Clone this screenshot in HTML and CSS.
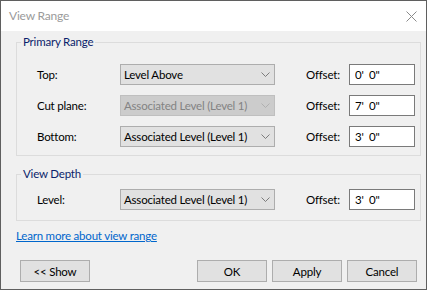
FILE: index.html
```html
<!DOCTYPE html>
<html lang="en">
<head>
  <meta charset="UTF-8">
  <title>View Range</title>
  <link rel="stylesheet" href="styles.css">
</head>
<body>
  <div class="dialog">
    <div class="titlebar">
      <span class="title">View Range</span>
      <svg class="close" width="11" height="11" viewBox="0 0 11 11">
        <path d="M0.5 0.5 L10.5 10.5 M10.5 0.5 L0.5 10.5" stroke="#8a8a8a" stroke-width="1" fill="none"/>
      </svg>
    </div>
    <div class="content">
      <fieldset class="group primary">
        <legend>Primary Range</legend>
        <div class="group-body">
          <div class="row">
            <span class="label">Top:</span>
            <div class="combo"><span>Level Above</span><svg class="chev" width="9" height="5" viewBox="0 0 9 5"><path d="M0.5 0.5 L4.5 4.5 L8.5 0.5" stroke="#707070" stroke-width="0.9" fill="none"/></svg></div>
            <span class="offset-label">Offset:</span>
            <input class="offset" type="text" value="0'  0&quot;">
          </div>
          <div class="row">
            <span class="label">Cut plane:</span>
            <div class="combo disabled"><span>Associated Level (Level 1)</span><svg class="chev" width="9" height="5" viewBox="0 0 9 5"><path d="M0.5 0.5 L4.5 4.5 L8.5 0.5" stroke="#adadad" stroke-width="0.9" fill="none"/></svg></div>
            <span class="offset-label">Offset:</span>
            <input class="offset" type="text" value="7'  0&quot;">
          </div>
          <div class="row">
            <span class="label">Bottom:</span>
            <div class="combo"><span>Associated Level (Level 1)</span><svg class="chev" width="9" height="5" viewBox="0 0 9 5"><path d="M0.5 0.5 L4.5 4.5 L8.5 0.5" stroke="#707070" stroke-width="0.9" fill="none"/></svg></div>
            <span class="offset-label">Offset:</span>
            <input class="offset" type="text" value="3'  0&quot;">
          </div>
        </div>
      </fieldset>
      <fieldset class="group depth">
        <legend>View Depth</legend>
        <div class="group-body">
          <div class="row">
            <span class="label">Level:</span>
            <div class="combo"><span>Associated Level (Level 1)</span><svg class="chev" width="9" height="5" viewBox="0 0 9 5"><path d="M0.5 0.5 L4.5 4.5 L8.5 0.5" stroke="#707070" stroke-width="0.9" fill="none"/></svg></div>
            <span class="offset-label">Offset:</span>
            <input class="offset" type="text" value="3'  0&quot;">
          </div>
        </div>
      </fieldset>
      <a class="help-link" href="#">Learn more about view range</a>
      <div class="buttons">
        <button class="btn">&lt;&lt; Show</button>
        <span class="spacer"></span>
        <button class="btn">OK</button>
        <button class="btn">Apply</button>
        <button class="btn">Cancel</button>
      </div>
    </div>
  </div>
</body>
</html>
```

FILE: styles.css
```css
body {
  margin: 0;
  font-family: Lato, "Liberation Sans", sans-serif;
  font-size: 11.5px;
  letter-spacing: -0.2px;
  color: #000;
}
.dialog {
  width: 427px;
  height: 290px;
  box-sizing: border-box;
  border: 1px solid #5f5f5f;
  background: #f0f0f0;
  display: flex;
  flex-direction: column;
}
.titlebar {
  height: 30px;
  flex: none;
  background: #fff;
  display: flex;
  align-items: center;
  justify-content: space-between;
  padding: 0 9px 0 8px;
}
.title {
  color: #9a9a9a;
  font-size: 12px;
  line-height: 16px;
}
.content {
  flex: 1;
  display: flex;
  flex-direction: column;
  padding: 0 5px 0 15px;
}
.group {
  margin: 0;
  padding: 0;
  border: 1px solid #dcdcdc;
  min-width: 0;
}
.group legend {
  padding: 0 2px;
  margin-left: 4px;
  line-height: 16px;
  color: #0b1e6b;
}
.primary {
  margin-top: 3px;
}
.primary .group-body {
  padding: 14px 0 8px 20px;
  display: flex;
  flex-direction: column;
  gap: 10px;
}
.depth {
  margin-top: 10px;
}
.depth .group-body {
  padding: 7px 0 10px 20px;
}
.row {
  display: flex;
  align-items: center;
  height: 21px;
}
.label {
  width: 83px;
  flex: none;
}
.combo {
  width: 155px;
  height: 21px;
  box-sizing: border-box;
  flex: none;
  border: 1px solid #adadad;
  background: #e1e1e1;
  display: flex;
  align-items: center;
  justify-content: space-between;
  padding: 0 4px 0 3px;
  white-space: nowrap;
}
.combo.disabled {
  background: #cccccc;
  border-color: #bfbfbf;
  color: #838383;
}
.chev {
  flex: none;
}
.offset-label {
  margin-left: 31px;
  width: 43px;
  flex: none;
}
.offset {
  width: 66px;
  height: 21px;
  box-sizing: border-box;
  border: 1px solid #7a7a7a;
  background: #fff;
  padding: 0 5px;
  font: inherit;
  letter-spacing: inherit;
  color: #000;
  margin: 0;
}
.help-link {
  margin-top: 7px;
  align-self: flex-start;
  line-height: 16px;
  color: #0066cc;
}
.buttons {
  display: flex;
  gap: 5px;
  margin: 16px 4px 0 4px;
}
.spacer {
  flex: 1;
}
.btn {
  width: 70px;
  height: 22px;
  box-sizing: border-box;
  border: 1px solid #adadad;
  background: #e1e1e1;
  font: inherit;
  letter-spacing: inherit;
  color: #000;
  padding: 0;
}
```
